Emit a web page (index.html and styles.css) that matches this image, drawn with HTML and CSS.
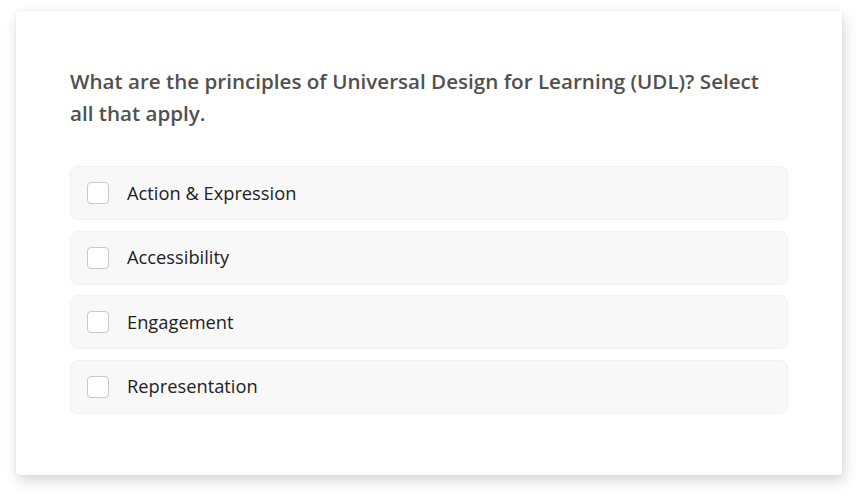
FILE: index.html
```html
<!DOCTYPE html>
<html lang="en">
<head>
<meta charset="utf-8">
<title>UDL Question</title>
<link rel="stylesheet" href="styles.css">
</head>
<body>
<div class="card">
  <h2 class="question">What are the principles of Universal Design for Learning (UDL)? Select all that apply.</h2>
  <ul class="options">
    <li class="option"><span class="box"></span><span class="label">Action &amp; Expression</span></li>
    <li class="option"><span class="box"></span><span class="label">Accessibility</span></li>
    <li class="option"><span class="box"></span><span class="label">Engagement</span></li>
    <li class="option"><span class="box"></span><span class="label">Representation</span></li>
  </ul>
</div>
</body>
</html>
```

FILE: styles.css
```css
html, body {
  margin: 0;
  padding: 0;
  background: #ffffff;
}
body {
  padding: 11px 16px 22px 16px;
  font-family: "Open Sans", "Noto Sans", sans-serif;
}
.card {
  background: #ffffff;
  border-radius: 3px;
  box-shadow: 0 0 2px rgba(0,0,0,0.10), 2px 6px 14px rgba(0,0,0,0.16);
  padding: 54px 54px 62px 54px;
  height: 464px;
  box-sizing: border-box;
}
.question {
  margin: 0 0 37px 0;
  max-width: 705px;
  font-size: 20.6px;
  font-weight: 600;
  line-height: 32px;
  color: #505050;
}
.options {
  list-style: none;
  margin: 0;
  padding: 0;
  display: flex;
  flex-direction: column;
  gap: 10.5px;
}
.option {
  display: flex;
  align-items: center;
  height: 54px;
  box-sizing: border-box;
  padding: 0 16px;
  background: #f8f8f8;
  border: 1px solid #f1f1f1;
  border-radius: 8px;
}
.box {
  width: 22px;
  height: 22px;
  box-sizing: border-box;
  border: 1.5px solid #c8c8c8;
  border-radius: 4px;
  background: #ffffff;
  flex: none;
}
.label {
  margin-left: 18px;
  font-size: 18.3px;
  color: #222222;
  position: relative;
  top: -1px;
}
```
